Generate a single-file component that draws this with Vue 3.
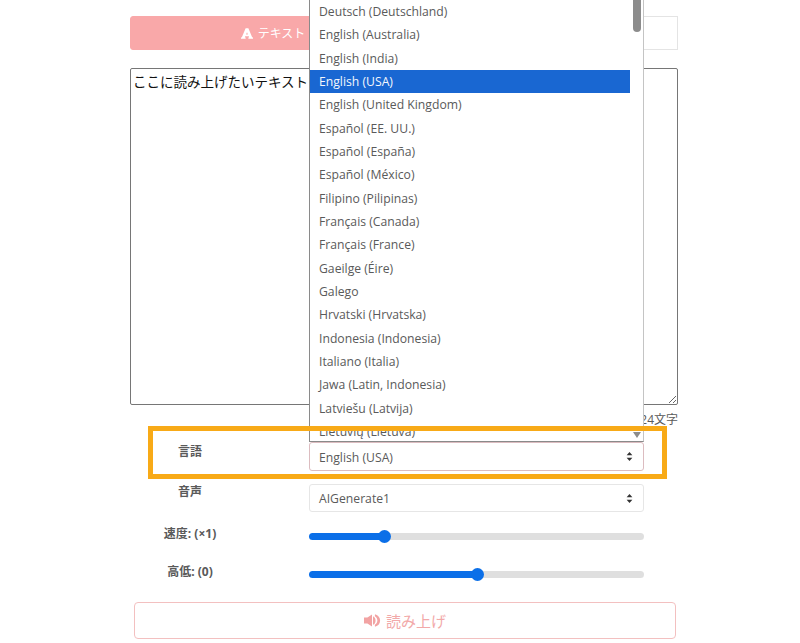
<template>
  <div class="page">
    <div class="tabs">
      <button class="tab tab-active">
        <svg class="tab-icon" viewBox="0 0 14 12" width="12" height="11">
          <path d="M5.4 0 L8.6 0 L13 10.4 L14 10.6 L14 12 L8.6 12 L8.6 10.6 L9.6 10.4 L9.1 9.2 L4.9 9.2 L4.4 10.4 L5.4 10.6 L5.4 12 L0 12 L0 10.6 L1 10.4 Z M7 4.4 L5.9 7.2 L8.1 7.2 Z" fill="#fff" fill-rule="evenodd" />
        </svg>
        テキスト
      </button>
      <button class="tab"></button>
    </div>

    <textarea class="text-input" :value="text"></textarea>
    <div class="count">{{ text.length }}文字</div>

    <div class="form-row lang-row">
      <label class="row-label">言語</label>
      <div class="select-wrap">
        <div class="dropdown">
          <ul class="option-list">
            <li v-for="lang in languages" :key="lang" class="option" :class="{ selected: lang === language }">{{ lang }}</li>
          </ul>
          <div class="fake-scrollbar">
            <div class="scroll-thumb"></div>
            <div class="scroll-down"></div>
          </div>
        </div>
        <div class="select focused">
          <span>{{ language }}</span>
          <svg class="updown" viewBox="0 0 8 11" width="7" height="9"><path d="M4 0 L7.5 4 L0.5 4 Z M4 11 L0.5 7 L7.5 7 Z" fill="#333" /></svg>
        </div>
      </div>
    </div>

    <div class="form-row voice-row">
      <label class="row-label">音声</label>
      <div class="select-wrap">
        <div class="select">
          <span>AIGenerate1</span>
          <svg class="updown" viewBox="0 0 8 11" width="7" height="9"><path d="M4 0 L7.5 4 L0.5 4 Z M4 11 L0.5 7 L7.5 7 Z" fill="#333" /></svg>
        </div>
      </div>
    </div>

    <div class="form-row slider-row speed-row">
      <label class="row-label small">速度: (×1)</label>
      <input class="slider" type="range" min="0" max="100" step="0.1" :value="speedPos" :style="trackStyle(speedPos)" />
    </div>

    <div class="form-row slider-row pitch-row">
      <label class="row-label small">高低: (0)</label>
      <input class="slider" type="range" min="0" max="100" step="0.1" :value="pitchPos" :style="trackStyle(pitchPos)" />
    </div>

    <button class="read-btn">
      <svg viewBox="0 0 17 13" width="17" height="13">
        <path d="M0 3.6 H3.4 L8 0.4 V12.6 L3.4 9.4 H0 Z" fill="#f2a3a3" />
        <path d="M9 2.2 C12.4 3.4 12.4 9.6 9 10.8 Z" fill="#f2a3a3" />
        <path d="M11 0.2 C17.8 1.8 17.8 11.2 11 12.8 L10.8 10.8 C14.2 9.4 14.2 3.6 10.8 2.2 Z" fill="#f2a3a3" />
      </svg>
      読み上げ
    </button>

    <div class="highlight"></div>
  </div>
</template>

<script setup>
const text = 'ここに読み上げたいテキストを入力してください。。'
const language = 'English (USA)'
const speedPos = 21.5
const pitchPos = 50.2

const languages = [
  'Deutsch (Deutschland)',
  'English (Australia)',
  'English (India)',
  'English (USA)',
  'English (United Kingdom)',
  'Español (EE. UU.)',
  'Español (España)',
  'Español (México)',
  'Filipino (Pilipinas)',
  'Français (Canada)',
  'Français (France)',
  'Gaeilge (Éire)',
  'Galego',
  'Hrvatski (Hrvatska)',
  'Indonesia (Indonesia)',
  'Italiano (Italia)',
  'Jawa (Latin, Indonesia)',
  'Latviešu (Latvija)',
  'Lietuvių (Lietuva)'
]

function trackStyle(pos) {
  return { background: `linear-gradient(to right, #0b6fe8 ${pos}%, #dfdfdf ${pos}%)` }
}
</script>

<style scoped>
.page {
  position: relative;
  width: 800px;
  height: 643px;
  overflow: hidden;
  box-sizing: border-box;
  padding: 16px 122px 0 130px;
  background: #fff;
  font-family: "Open Sans", "Noto Sans CJK JP", sans-serif;
  font-size: 12.2px;
  color: #5a5a5a;
}

.tabs {
  display: grid;
  grid-template-columns: 286px 1fr;
  height: 34px;
}

.tab {
  display: flex;
  align-items: center;
  justify-content: center;
  gap: 5px;
  background: #fff;
  border: 1px solid #e4e4e4;
  font-family: inherit;
  font-size: 12px;
  color: #fff;
  padding: 0;
}

.tab-active {
  background: #f9a8a9;
  border-color: #f9a8a9;
  border-radius: 3px 0 0 3px;
}

.text-input {
  display: block;
  box-sizing: border-box;
  width: 100%;
  height: 337px;
  margin-top: 18px;
  padding: 2px 3px 2px 2px;
  border: 1px solid #767676;
  border-radius: 2px;
  font-family: "Noto Sans CJK JP", sans-serif;
  font-size: 13.5px;
  line-height: 20px;
  color: #111;
  outline: none;
}

.count {
  height: 37px;
  padding-top: 7px;
  box-sizing: border-box;
  text-align: right;
  font-size: 12px;
  line-height: 16px;
  color: #5a5a5a;
}

.form-row {
  display: grid;
  grid-template-columns: 120px 335px;
  column-gap: 59px;
}

.voice-row {
  margin-top: 13px;
}

.row-label {
  text-align: center;
  font-size: 12px;
  font-weight: bold;
  line-height: 20px;
  color: #5a5a5a;
}

.voice-row .row-label {
  margin-top: -2px;
}

.select-wrap {
  position: relative;
}

.select {
  display: flex;
  align-items: center;
  justify-content: space-between;
  box-sizing: border-box;
  height: 29px;
  padding: 0 10px 0 9px;
  background: #fff;
  border: 1px solid #e6e6e6;
  border-radius: 3px;
}

.voice-row .select {
  height: 28px;
}

.lang-row .select span {
  margin-top: 1px;
}

.select.focused {
  border-color: #dcbcc0;
}

.dropdown {
  position: absolute;
  left: 0;
  right: 0;
  bottom: 100%;
  height: 442px;
  display: flex;
  box-sizing: border-box;
  background: #fff;
  border-left: 1px solid #8a8a8a;
  border-right: 1px solid #c4c4c4;
  border-bottom: 1px solid #8a8a8a;
  overflow: hidden;
  z-index: 2;
}

.option-list {
  flex: 1;
  margin: 0;
  padding: 0;
  list-style: none;
}

.option {
  height: 23.33px;
  line-height: 23.33px;
  padding-left: 9px;
  white-space: nowrap;
}

.option.selected {
  background: #1967d2;
  color: #f4f7fc;
}

.fake-scrollbar {
  position: relative;
  width: 13px;
  flex: none;
}

.scroll-thumb {
  position: absolute;
  top: -8px;
  left: 3px;
  width: 8px;
  height: 40px;
  border-radius: 4px;
  background: #8c8c8c;
}

.scroll-down {
  position: absolute;
  bottom: 3px;
  left: 3px;
  border-left: 4.5px solid transparent;
  border-right: 4.5px solid transparent;
  border-top: 6px solid #8c8c8c;
}

.slider-row {
  align-items: center;
}

.speed-row {
  margin-top: 14px;
  height: 20px;
}

.pitch-row {
  margin-top: 18px;
  height: 20px;
}

.speed-row .row-label,
.pitch-row .row-label {
  margin-top: -5px;
}

.slider {
  -webkit-appearance: none;
  appearance: none;
  display: block;
  width: 335px;
  height: 7px;
  margin: 0;
  border-radius: 4px;
  outline: none;
}

.slider::-webkit-slider-runnable-track {
  height: 7px;
  background: transparent;
}

.slider::-webkit-slider-thumb {
  -webkit-appearance: none;
  appearance: none;
  width: 13px;
  height: 13px;
  margin-top: -3px;
  border-radius: 50%;
  background: #0b6fe8;
}

.read-btn {
  display: flex;
  align-items: center;
  justify-content: center;
  gap: 5px;
  box-sizing: border-box;
  width: 542px;
  height: 37px;
  margin: 18px 0 0 4px;
  background: #fff;
  border: 1px solid #f3c0c0;
  border-radius: 4px;
  font-family: inherit;
  font-size: 15px;
  color: #f2a9a9;
}

.highlight {
  position: absolute;
  left: 148px;
  top: 426px;
  width: 519px;
  height: 53px;
  box-sizing: border-box;
  border: 5px solid #f8aa17;
  z-index: 3;
}
</style>
